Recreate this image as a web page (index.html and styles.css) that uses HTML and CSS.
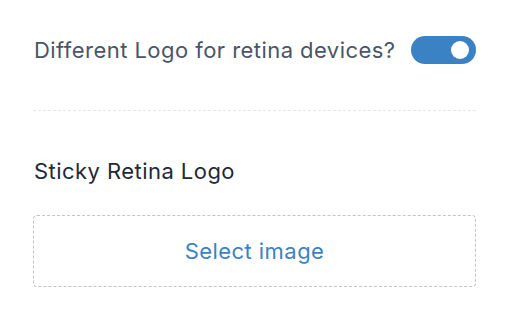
FILE: index.html
```html
<!DOCTYPE html>
<html>
<head>
    <title>Logo Settings</title>
    <link rel="stylesheet" href="styles.css">
</head>
<body>
    <div class="panel">
        <div class="setting-row">
            <span class="setting-label">Different Logo for retina devices?</span>
            <label class="toggle">
                <input type="checkbox" checked>
                <span class="toggle-track"></span>
            </label>
        </div>

        <div class="divider"></div>

        <div class="field">
            <div class="field-title">Sticky Retina Logo</div>
            <div class="upload-box">
                <span class="upload-link">Select image</span>
            </div>
        </div>
    </div>
</body>
</html>
```

FILE: styles.css
```css
body {
    font-family: Inter, 'Noto Sans', sans-serif;
    background-color: #ffffff;
    margin: 0;
    padding: 0;
}

.panel {
    padding: 36px 36px 0 33px;
}

.setting-row {
    display: flex;
    align-items: center;
    justify-content: space-between;
    height: 28px;
}

.setting-label {
    color: #4a5568;
    font-size: 22px;
    letter-spacing: 0.45px;
    padding-left: 1px;
}

.toggle {
    position: relative;
    display: inline-block;
    width: 65px;
    height: 28px;
}

.toggle input {
    display: none;
}

.toggle-track {
    position: absolute;
    inset: 0;
    background-color: #3b82c4;
    border-radius: 14px;
    cursor: pointer;
}

.toggle-track::after {
    content: "";
    position: absolute;
    top: 5px;
    right: 7px;
    width: 18px;
    height: 18px;
    border-radius: 50%;
    background-color: #ffffff;
}

.divider {
    border-top: 1px dashed #e6e6e6;
    margin-top: 46px;
}

.field {
    padding-top: 47px;
}

.field-title {
    color: #1f2937;
    font-size: 22px;
    letter-spacing: 0.45px;
    padding-left: 1px;
    line-height: 26px;
}

.upload-box {
    margin-top: 31px;
    height: 70px;
    border: 1px dashed #c4c4c4;
    border-radius: 4px;
    display: flex;
    align-items: center;
    justify-content: center;
}

.upload-link {
    color: #3b82c4;
    font-size: 22px;
    letter-spacing: 0.45px;
    cursor: pointer;
}
```
